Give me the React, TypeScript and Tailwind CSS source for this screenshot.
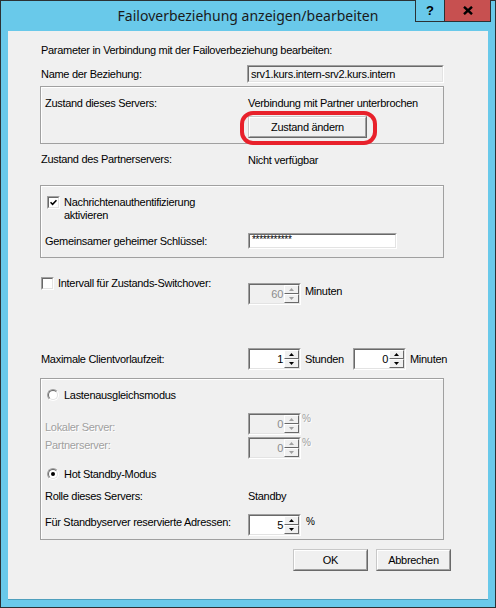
import React from "react";

const FONT = { fontFamily: '"Liberation Sans", Arial, sans-serif' };

function Sunken({ className = "", inner = "", children }: { className?: string; inner?: string; children?: React.ReactNode }) {
  return (
    <div className={"border border-t-[#a0a0a0] border-l-[#a0a0a0] border-b-white border-r-white " + className}>
      <div className={"h-full w-full border border-t-[#696969] border-l-[#696969] border-b-[#e3e3e3] border-r-[#e3e3e3] " + inner}>
        {children}
      </div>
    </div>
  );
}

function Arrow({ up, disabled }: { up?: boolean; disabled?: boolean }) {
  const c = disabled ? "#a0a0a0" : "#000";
  return (
    <svg width="5" height="3" viewBox="0 0 5 3">
      {up ? <polygon points="2.5,0 5,3 0,3" fill={c} /> : <polygon points="0,0 5,0 2.5,3" fill={c} />}
    </svg>
  );
}

function UpDownBtn({ up, disabled }: { up?: boolean; disabled?: boolean }) {
  return (
    <div className="flex h-[9px] w-[15px] items-center justify-center border border-t-white border-l-white border-b-[#696969] border-r-[#696969] bg-[#f0f0f0]">
      <Arrow up={up} disabled={disabled} />
    </div>
  );
}

function Spinner({ value, disabled }: { value: string; disabled?: boolean }) {
  return (
    <Sunken className="h-[22px] w-[53px] shrink-0" inner={(disabled ? "bg-[#f0f0f0]" : "bg-white") + " flex"}>
      <div className={"flex-1 pr-[1px] text-right text-[11px] leading-[18px] " + (disabled ? "text-[#8c8c8c]" : "text-black")}>{value}</div>
      <div className="flex flex-col">
        <UpDownBtn up disabled={disabled} />
        <UpDownBtn disabled={disabled} />
      </div>
    </Sunken>
  );
}

function Checkbox({ checked }: { checked?: boolean }) {
  return (
    <Sunken className="h-[13px] w-[13px] shrink-0" inner="bg-white flex items-center justify-center">
      {checked && (
        <svg width="7" height="7" viewBox="0 0 7 7">
          <path d="M0.5 3.2 L2.6 5.3 L6.5 1.2" stroke="#000" strokeWidth="1.6" fill="none" />
        </svg>
      )}
    </Sunken>
  );
}

function Radio({ checked }: { checked?: boolean }) {
  return (
    <div className="h-[12px] w-[12px] shrink-0 rounded-full border border-t-[#a0a0a0] border-l-[#a0a0a0] border-b-white border-r-white">
      <div className="flex h-full w-full items-center justify-center rounded-full border border-t-[#696969] border-l-[#696969] border-b-[#e3e3e3] border-r-[#e3e3e3] bg-white">
        {checked && <div className="h-[4px] w-[4px] rounded-full bg-black" />}
      </div>
    </div>
  );
}

function Button({ children, className = "" }: { children: React.ReactNode; className?: string }) {
  return (
    <div className={"h-[22px] border border-t-[#c8c8c8] border-l-[#c8c8c8] border-b-[#696969] border-r-[#696969] " + className}>
      <div className="flex h-full w-full items-center justify-center border border-t-white border-l-white border-b-[#a0a0a0] border-r-[#a0a0a0] bg-[#f0f0f0] text-[11px] text-black">
        {children}
      </div>
    </div>
  );
}

function Group({ className = "", children }: { className?: string; children: React.ReactNode }) {
  return (
    <div className={"relative w-[404px] border border-[#a0a0a0] shadow-[inset_1px_1px_0_#ffffff] " + className}>{children}</div>
  );
}

const Dis = "text-[#a0a0a0] [text-shadow:1px_1px_0_#ffffff]";

export default function App() {
  return (
    <div className="h-[608px] w-[496px] border border-[#2b3134] bg-[#69c9ea]" style={FONT}>
      {/* title bar */}
      <div className="flex h-[30px] items-start">
        <div className="w-[80px] shrink-0" />
        <div className="flex-1 pt-[5px] text-center text-[14px] leading-[20px] text-[#1a1a1a]" style={{ fontFamily: '"Noto Sans", "Open Sans", sans-serif' }}>
          Failoverbeziehung anzeigen/bearbeiten
        </div>
        <div className="-mt-px flex h-[22px] shrink-0">
          <div className="flex w-[29px] items-center justify-center border-b border-l border-[#2b3134] bg-[#69c9ea] text-[13px] font-bold leading-none text-black">
            ?
          </div>
          <div className="flex w-[47px] items-center justify-center border-b border-l border-r border-[#2b3134] bg-[#c75050]">
            <svg width="10" height="9" viewBox="0 0 10 9">
              <path d="M1 0.8 L9 8.2 M9 0.8 L1 8.2" stroke="#000" strokeWidth="2.4" />
            </svg>
          </div>
        </div>
        <div className="w-[4px] shrink-0" />
      </div>

      {/* client */}
      <div className="mx-[7px] flex h-[569px] flex-col border-b border-[#4f9fbd] bg-[#f0f0f0] pl-[32px] text-[11px] leading-[14px] tracking-[-0.3px] text-black">
        <div className="mt-[12px] flex h-[14px] items-center pl-[1px]">Parameter in Verbindung mit der Failoverbeziehung bearbeiten:</div>

        <div className="mt-[8px] flex h-[18px] items-center">
          <div className="w-[207px] pl-[1px]">Name der Beziehung:</div>
          <Sunken className="h-[18px] w-[197px]" inner="bg-[#f0f0f0] pl-[2px] leading-[14px]">
            srv1.kurs.intern-srv2.kurs.intern
          </Sunken>
        </div>

        <Group className="mt-[3px] h-[58px] pl-[4px]">
          <div className="mt-[9px] flex h-[14px] items-center">
            <div className="w-[203px]">Zustand dieses Servers:</div>
            <div>Verbindung mit Partner unterbrochen</div>
          </div>
          <div className="mt-[6px] pl-[203px]">
            <Button className="w-[119px]">Zustand ändern</Button>
          </div>
          <div className="pointer-events-none absolute left-[199px] top-[24px] h-[34px] w-[137px] rounded-[13px] border-[4px] border-[#e8212b]" />
        </Group>

        <div className="mt-[8px] flex h-[14px] items-center">
          <div className="w-[208px] pl-[1px]">Zustand des Partnerservers:</div>
          <div className="pt-[2px]">Nicht verfügbar</div>
        </div>

        <Group className="mt-[19px] h-[73px]">
          <div className="ml-[6px] mt-[10px] flex items-start">
            <Checkbox checked />
            <div className="ml-[4px] leading-[13px]">
              Nachrichtenauthentifizierung
              <br />
              aktivieren
            </div>
          </div>
          <div className="mt-[11px] flex h-[16px] items-center pl-[4px]">
            <div className="w-[203px]">Gemeinsamer geheimer Schlüssel:</div>
            <Sunken className="h-[16px] w-[149px]" inner="bg-white pl-[2px] text-[10px] leading-[10px]">
              ***********
            </Sunken>
          </div>
        </Group>

        <div className="mt-[19px] flex items-start">
          <div className="flex w-[208px] items-start pl-[1px]">
            <Checkbox />
            <div className="ml-[4px] leading-[13px]">Intervall für Zustands-Switchover:</div>
          </div>
          <div className="mt-[6px] flex items-start">
            <Spinner value="60" disabled />
            <div className="ml-[4px] mt-[1px]">Minuten</div>
          </div>
        </div>

        <div className="mt-[43px] flex h-[22px] items-center">
          <div className="w-[208px] pl-[1px]">Maximale Clientvorlaufzeit:</div>
          <Spinner value="1" />
          <div className="w-[52px] pl-[4px]">Stunden</div>
          <Spinner value="0" />
          <div className="pl-[4px]">Minuten</div>
        </div>

        <Group className="mt-[8px] h-[162px]">
          <div className="ml-[6px] mt-[10px] flex h-[12px] items-center">
            <Radio />
            <div className="ml-[5px]">Lastenausgleichsmodus</div>
          </div>
          <div className="mt-[12px] flex items-start pl-[4px]">
            <div className={"mt-[7px] w-[203px] " + Dis}>Lokaler Server:</div>
            <Spinner value="0" disabled />
            <div className={"ml-[1px] text-[10px] leading-[12px] " + Dis}>%</div>
          </div>
          <div className="mt-[2px] flex items-start pl-[4px]">
            <div className={"mt-[1px] w-[203px] " + Dis}>Partnerserver:</div>
            <Spinner value="0" disabled />
            <div className={"ml-[1px] text-[10px] leading-[12px] " + Dis}>%</div>
          </div>
          <div className="ml-[6px] mt-[9px] flex h-[12px] items-center">
            <Radio checked />
            <div className="ml-[5px]">Hot Standby-Modus</div>
          </div>
          <div className="mt-[9px] flex h-[14px] items-center pl-[4px]">
            <div className="w-[203px]">Rolle dieses Servers:</div>
            <div>Standby</div>
          </div>
          <div className="mt-[11px] flex items-start pl-[4px]">
            <div className="mt-[1px] w-[203px]">Für Standbyserver reservierte Adressen:</div>
            <Spinner value="5" />
            <div className="ml-[5px] mt-[1px] text-[10px]">%</div>
          </div>
        </Group>

        <div className="mt-[9px] flex w-[411px] justify-end gap-[8px]">
          <Button className="w-[75px]">OK</Button>
          <Button className="w-[75px]">Abbrechen</Button>
        </div>
      </div>
    </div>
  );
}
